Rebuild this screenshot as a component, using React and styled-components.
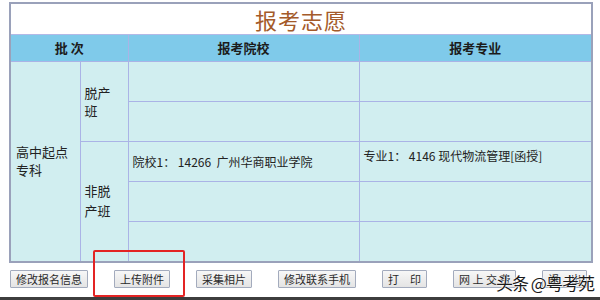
import React from "react";
import styled, { createGlobalStyle } from "styled-components";

const GlobalStyle = createGlobalStyle`
  html, body {
    margin: 0;
    padding: 0;
    background: #ffffff;
  }
  body {
    font-family: "Noto Sans CJK SC", "Liberation Sans", sans-serif;
  }
`;

const Page = styled.div`
  position: relative;
  width: 600px;
  height: 300px;
  overflow: hidden;
  display: flex;
  flex-direction: column;
  background: #ffffff;
`;

const Table = styled.table`
  margin: 2px 0 0 9px;
  width: 582px;
  table-layout: fixed;
  border-collapse: collapse;
  border: 2px solid #9aa1ba;
  font-size: 13px;
  color: #222;
`;

const TitleCell = styled.th`
  height: 30px;
  padding: 0;
  background: #ffffff;
  color: #a45a2a;
  font-size: 22px;
  line-height: 30px;
  font-weight: 400;
  text-align: center;
  letter-spacing: 1px;
  border-bottom: 1px solid #b3b9e6;
`;

const HeadCell = styled.th`
  height: 26px;
  padding: 0;
  background: #7fcaea;
  color: #1c1c1c;
  font-size: 13px;
  line-height: 16px;
  font-weight: 700;
  text-align: center;
  border: 1px solid #aab3e6;
`;

const Cell = styled.td`
  height: 40px;
  box-sizing: border-box;
  padding: ${(p) => p.$pad || "0 4px"};
  background: #d1eef0;
  border: 1px solid #aab3e6;
  vertical-align: ${(p) => p.$valign || "middle"};
  font-size: ${(p) => p.$size || "13px"};
  line-height: ${(p) => p.$lh || "18px"};
`;

const Narrow = styled.span`
  display: block;
  width: ${(p) => p.$w || "28px"};
`;

const Bar = styled.div`
  display: flex;
  gap: 26px;
  margin: 7px 0 0 10px;
`;

const Button = styled.button`
  height: 18px;
  padding: 0 5px;
  font-family: "Noto Sans CJK SC", "Liberation Sans", sans-serif;
  font-size: 11px;
  line-height: 16px;
  color: #2a2a2a;
  background: linear-gradient(#f7f7f7, #e4e4e4);
  border: 1px solid #a3abbd;
  border-radius: 1px;
  white-space: pre;
`;

const Highlight = styled.div`
  position: absolute;
  left: 93px;
  top: 250px;
  width: 88px;
  height: 43px;
  border: 2px solid #e32424;
  border-radius: 2px;
`;

const Watermark = styled.div`
  position: absolute;
  left: 496px;
  top: 273px;
  font-size: 17px;
  line-height: 20px;
  color: #1a1a1a;
  letter-spacing: -1px;
  text-shadow: 0 0 2px #fff, 0 0 2px #fff, 0 0 1px #fff;
`;

const BottomStrip = styled.div`
  position: absolute;
  left: 0;
  right: 0;
  bottom: 0;
  height: 3px;
  background: #3d3d3d;
`;

const buttons = ["修改报名信息", "上传附件", "采集相片", "修改联系手机", "打　印", "网 上 交 费", "退　出"];

export default function App() {
  return (
    <>
      <GlobalStyle />
      <Page>
        <Table>
          <colgroup>
            <col style={{ width: 70 }} />
            <col style={{ width: 48 }} />
            <col style={{ width: 231 }} />
            <col style={{ width: 233 }} />
          </colgroup>
          <thead>
            <tr>
              <TitleCell colSpan={4}>报考志愿</TitleCell>
            </tr>
            <tr>
              <HeadCell colSpan={2}>批 次</HeadCell>
              <HeadCell>报考院校</HeadCell>
              <HeadCell>报考专业</HeadCell>
            </tr>
          </thead>
          <tbody>
            <tr>
              <Cell rowSpan={5} $pad="0 4px 0 5px">
                高中起点
                <br />
                专科
              </Cell>
              <Cell rowSpan={2} $lh="18px">
                <Narrow>脱产班</Narrow>
              </Cell>
              <Cell />
              <Cell />
            </tr>
            <tr>
              <Cell />
              <Cell />
            </tr>
            <tr>
              <Cell rowSpan={3} $lh="20px">
                <Narrow>非脱产班</Narrow>
              </Cell>
              <Cell $size="12px">院校1： 14266&nbsp; 广州华商职业学院</Cell>
              <Cell $size="12px" $valign="top" $pad="5px 4px 0">
                专业1： 4146 现代物流管理[函授]
              </Cell>
            </tr>
            <tr>
              <Cell />
              <Cell />
            </tr>
            <tr>
              <Cell />
              <Cell />
            </tr>
          </tbody>
        </Table>
        <Bar>
          {buttons.map((b) => (
            <Button key={b}>{b}</Button>
          ))}
        </Bar>
        <Highlight />
        <Watermark>头条 @粤考苑</Watermark>
        <BottomStrip />
      </Page>
    </>
  );
}
